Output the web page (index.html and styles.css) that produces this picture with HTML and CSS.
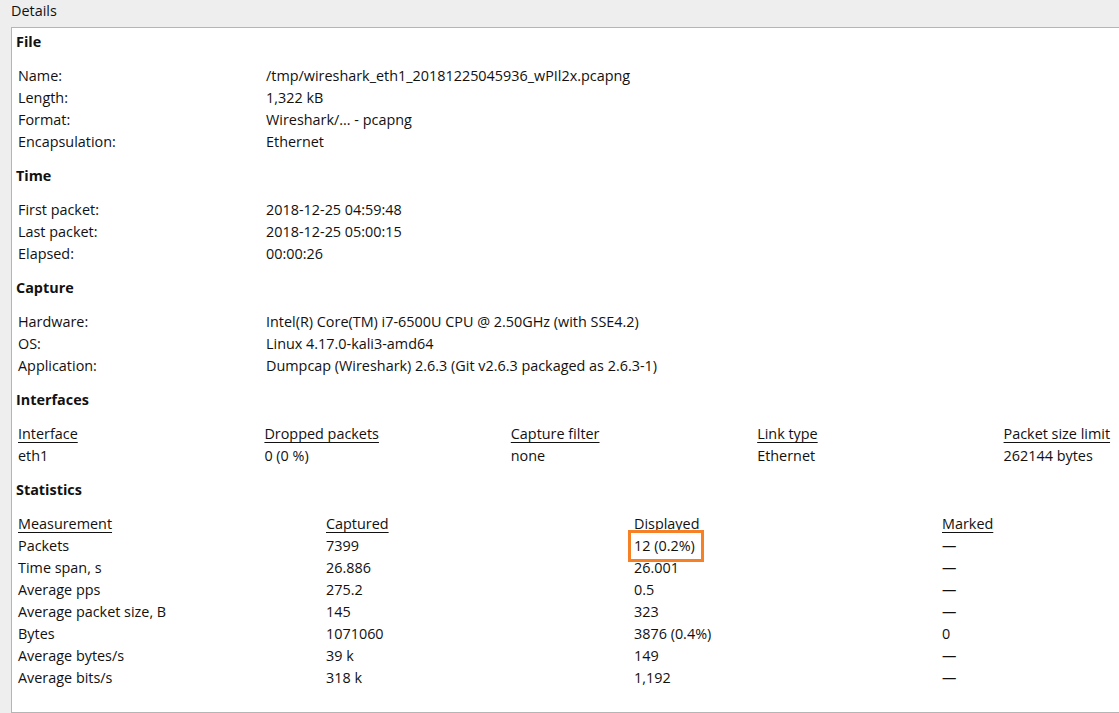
FILE: index.html
```html
<!DOCTYPE html>
<html>
<head>
<meta charset="utf-8">
<link rel="stylesheet" href="styles.css">
</head>
<body>
<div class="window">
  <div class="title">Details</div>
  <div class="panel">
    <div class="section">
      <div class="sec-head">File</div>
      <div class="info">
        <div class="row"><span class="lbl">Name:</span><span class="val">/tmp/wireshark_eth1_20181225045936_wPIl2x.pcapng</span></div>
        <div class="row"><span class="lbl">Length:</span><span class="val">1,322 kB</span></div>
        <div class="row"><span class="lbl">Format:</span><span class="val">Wireshark/... - pcapng</span></div>
        <div class="row"><span class="lbl">Encapsulation:</span><span class="val">Ethernet</span></div>
      </div>
    </div>
    <div class="section">
      <div class="sec-head">Time</div>
      <div class="info">
        <div class="row"><span class="lbl">First packet:</span><span class="val">2018-12-25 04:59:48</span></div>
        <div class="row"><span class="lbl">Last packet:</span><span class="val">2018-12-25 05:00:15</span></div>
        <div class="row"><span class="lbl">Elapsed:</span><span class="val">00:00:26</span></div>
      </div>
    </div>
    <div class="section">
      <div class="sec-head">Capture</div>
      <div class="info">
        <div class="row"><span class="lbl">Hardware:</span><span class="val">Intel(R) Core(TM) i7-6500U CPU @ 2.50GHz (with SSE4.2)</span></div>
        <div class="row"><span class="lbl">OS:</span><span class="val">Linux 4.17.0-kali3-amd64</span></div>
        <div class="row"><span class="lbl">Application:</span><span class="val">Dumpcap (Wireshark) 2.6.3 (Git v2.6.3 packaged as 2.6.3-1)</span></div>
      </div>
    </div>
    <div class="section">
      <div class="sec-head">Interfaces</div>
      <div class="grid grid5">
        <span class="th">Interface</span><span class="th">Dropped packets</span><span class="th">Capture filter</span><span class="th">Link type</span><span class="th">Packet size limit</span>
        <span>eth1</span><span>0 (0 %)</span><span>none</span><span>Ethernet</span><span>262144 bytes</span>
      </div>
    </div>
    <div class="section">
      <div class="sec-head">Statistics</div>
      <div class="grid grid4">
        <span class="th">Measurement</span><span class="th">Captured</span><span class="th plain">Displayed</span><span class="th">Marked</span>
        <span>Packets</span><span>7399</span><span><span class="hl">12 (0.2%)</span></span><span>—</span>
        <span>Time span, s</span><span>26.886</span><span>26.001</span><span>—</span>
        <span>Average pps</span><span>275.2</span><span>0.5</span><span>—</span>
        <span>Average packet size, B</span><span>145</span><span>323</span><span>—</span>
        <span>Bytes</span><span>1071060</span><span>3876 (0.4%)</span><span>0</span>
        <span>Average bytes/s</span><span>39 k</span><span>149</span><span>—</span>
        <span>Average bits/s</span><span>318 k</span><span>1,192</span><span>—</span>
      </div>
    </div>
  </div>
</div>
</body>
</html>
```

FILE: styles.css
```css
html, body {
  margin: 0;
  padding: 0;
  background: #eeeeee;
  overflow: hidden;
  width: 1119px;
  height: 713px;
}
body {
  font-family: "Open Sans", "Noto Sans", sans-serif;
  font-size: 14.4px;
  color: #111111;
}
.window {
  padding-left: 11px;
  width: 1119px;
  height: 713px;
  box-sizing: border-box;
  overflow: hidden;
}
.title {
  height: 27px;
  line-height: 22px;
}
.panel {
  background: #ffffff;
  border: 1px solid #b5b5b5;
  border-right: none;
  width: 1108px;
  height: 686px;
  box-sizing: border-box;
  padding: 3px 0 0 4px;
  overflow: hidden;
}
.section {
  margin-bottom: 12px;
}
.sec-head {
  font-weight: bold;
  line-height: 22px;
  margin-bottom: 12px;
}
.info .row {
  display: flex;
  line-height: 22px;
  padding-left: 2px;
  white-space: nowrap;
}
.lbl {
  width: 248px;
  flex: none;
}
.grid {
  display: grid;
  line-height: 22px;
  padding-left: 2px;
  width: 1232px;
  white-space: nowrap;
}
.grid5 {
  grid-template-columns: repeat(5, 246.4px);
}
.grid4 {
  grid-template-columns: repeat(4, 308px);
}
.th {
  text-decoration: underline;
  text-underline-offset: 3px;
}
.th.plain {
  text-decoration: none;
}
.hl {
  position: relative;
  display: inline-block;
}
.hl::after {
  content: "";
  position: absolute;
  left: -6px;
  right: -9px;
  top: -5px;
  bottom: -5px;
  border: 3px solid #f58025;
}
```
